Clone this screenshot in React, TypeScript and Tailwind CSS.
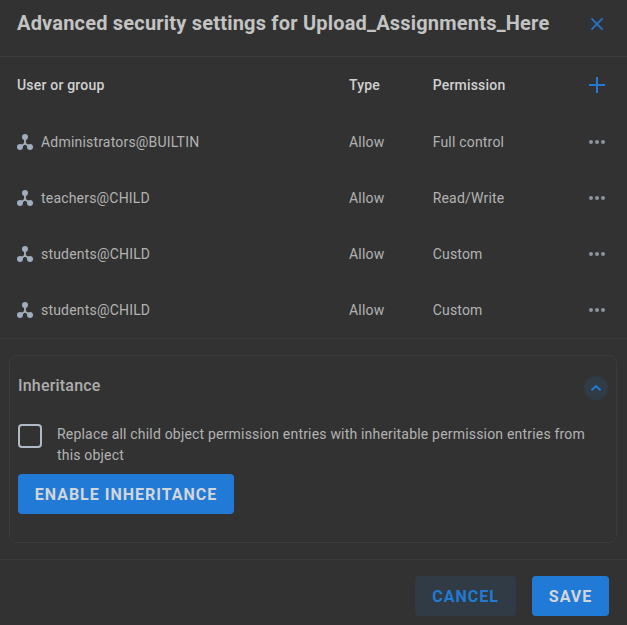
const rows = [
  { name: 'Administrators@BUILTIN', type: 'Allow', permission: 'Full control' },
  { name: 'teachers@CHILD', type: 'Allow', permission: 'Read/Write' },
  { name: 'students@CHILD', type: 'Allow', permission: 'Custom' },
  { name: 'students@CHILD', type: 'Allow', permission: 'Custom' },
];

function GroupIcon() {
  return (
    <svg width="16" height="16" viewBox="0 0 16 16" fill="#9fadbd" stroke="#9fadbd">
      <path d="M8 3v6.5M8 9.5l-5 3.5M8 9.5l5 3.5" fill="none" strokeWidth="1.9" />
      <circle cx="8" cy="3" r="3" stroke="none" />
      <circle cx="3" cy="13" r="3" stroke="none" />
      <circle cx="13" cy="13" r="3" stroke="none" />
    </svg>
  );
}

function DotsIcon() {
  return (
    <svg width="16" height="4" viewBox="0 0 16 4" fill="#8b95a1">
      <circle cx="2" cy="2" r="2" />
      <circle cx="8" cy="2" r="2" />
      <circle cx="14" cy="2" r="2" />
    </svg>
  );
}

export default function App() {
  return (
    <div className="flex h-[625px] w-[627px] flex-col overflow-hidden bg-[#323232] font-['Roboto',sans-serif] text-sm tracking-[0.19px] text-[#b2b2b2]">
      <header className="flex h-[57px] shrink-0 items-start justify-between border-b border-[#3e3e3e] pr-[23px] pl-[17px]">
        <h1 className="pt-[9px] text-xl leading-7 font-bold tracking-[0.2px] whitespace-nowrap text-[#c3c3c3]">
          Advanced security settings for Upload_Assignments_Here
        </h1>
        <button aria-label="Close" className="mt-[17px]">
          <svg width="14" height="14" viewBox="0 0 14 14" stroke="#2472c0" strokeWidth="2">
            <path d="M1.4 1.4l11.2 11.2M12.6 1.4L1.4 12.6" />
          </svg>
        </button>
      </header>

      <section className="shrink-0 border-b border-[#3b3b3b]">
        <div className="grid h-[57px] grid-cols-[332px_83.7px_1fr_16px] items-center pr-[22px] pb-px pl-[17px] font-medium text-[#d0d0d0]">
          <span>User or group</span>
          <span>Type</span>
          <span>Permission</span>
          <button aria-label="Add">
            <svg width="16" height="16" viewBox="0 0 16 16" stroke="#217bd6" strokeWidth="2">
              <path d="M8 0v16M0 8h16" />
            </svg>
          </button>
        </div>
        {rows.map((row, i) => (
          <div key={i} className="grid h-14 grid-cols-[332px_83.7px_1fr_16px] items-center pr-[22px] pl-[17px]">
            <span className="flex items-center gap-2">
              <GroupIcon />
              {row.name}
            </span>
            <span>{row.type}</span>
            <span>{row.permission}</span>
            <button aria-label="More" className="flex">
              <DotsIcon />
            </button>
          </div>
        ))}
      </section>

      <section className="mt-4 mr-[10px] ml-[9px] h-[188px] shrink-0 rounded-lg border border-[#3c3c3c] px-2">
        <div className="flex h-[60px] items-center justify-between">
          <h2 className="text-base font-medium tracking-[0.2px] text-[#aeaeae]">Inheritance</h2>
          <button aria-label="Collapse" className="mt-1 flex size-6 items-center justify-center rounded-full bg-[#303b46]">
            <svg width="12" height="8" viewBox="0 0 12 8" fill="none" stroke="#217bd6" strokeWidth="2">
              <path d="M1.4 6.3L6 2l4.6 4.3" />
            </svg>
          </button>
        </div>
        <label className="flex h-[58px] gap-[15px] pt-2">
          <span className="size-6 shrink-0 rounded-[4px] border-2 border-[#b0bac6]" />
          <span className="w-[545px] leading-[21px]">
            Replace all child object permission entries with inheritable permission entries from this object
          </span>
        </label>
        <button className="h-10 w-[216px] rounded-[4px] bg-[#217bd6] pt-px text-base font-bold tracking-[1px] text-[#d3d6d9]">
          ENABLE INHERITANCE
        </button>
      </section>

      <footer className="mt-4 flex flex-1 justify-end gap-4 border-t border-[#3c3c3c] pt-4 pr-[18px] text-base font-bold tracking-[1px]">
        <button className="h-10 w-[101px] rounded-[4px] bg-[#303b45] pt-px text-[#217bd6]">CANCEL</button>
        <button className="h-10 w-[77px] rounded-[4px] bg-[#217bd6] pt-px text-[#d3d6d9]">SAVE</button>
      </footer>
    </div>
  );
}
